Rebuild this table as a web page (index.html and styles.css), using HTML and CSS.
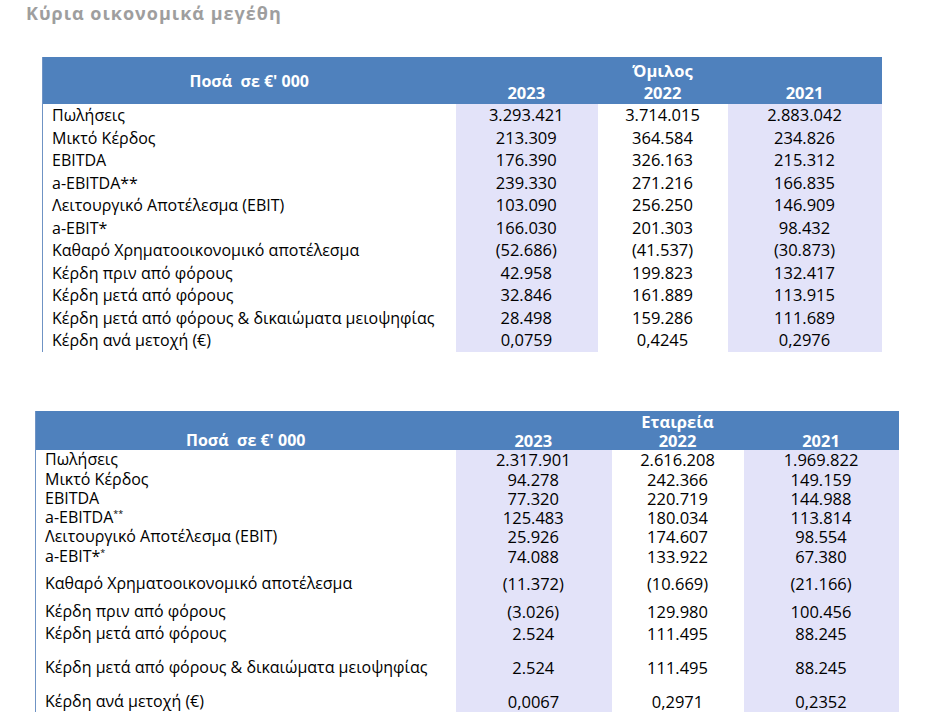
FILE: index.html
```html
<!DOCTYPE html>
<html lang="el">
<head>
<meta charset="utf-8">
<title>Κύρια οικονομικά μεγέθη</title>
<link rel="stylesheet" href="styles.css">
</head>
<body>
<h1 class="title">Κύρια οικονομικά μεγέθη</h1>

<table class="fin fin-group">
  <colgroup>
    <col class="c-label"><col class="c-a"><col class="c-b"><col class="c-c">
  </colgroup>
  <thead>
    <tr>
      <th class="h-label">Ποσά&nbsp; σε €' 000</th>
      <th class="h-year">2023</th>
      <th class="h-year">Όμιλος<br>2022</th>
      <th class="h-year">2021</th>
    </tr>
  </thead>
  <tbody>
    <tr><td class="lbl">Πωλήσεις</td><td class="num sh">3.293.421</td><td class="num">3.714.015</td><td class="num sh">2.883.042</td></tr>
    <tr><td class="lbl">Μικτό Κέρδος</td><td class="num sh">213.309</td><td class="num">364.584</td><td class="num sh">234.826</td></tr>
    <tr><td class="lbl">EBITDA</td><td class="num sh">176.390</td><td class="num">326.163</td><td class="num sh">215.312</td></tr>
    <tr><td class="lbl">a-EBITDA**</td><td class="num sh">239.330</td><td class="num">271.216</td><td class="num sh">166.835</td></tr>
    <tr><td class="lbl">Λειτουργικό Αποτέλεσμα (EBIT)</td><td class="num sh">103.090</td><td class="num">256.250</td><td class="num sh">146.909</td></tr>
    <tr><td class="lbl">a-EBIT*</td><td class="num sh">166.030</td><td class="num">201.303</td><td class="num sh">98.432</td></tr>
    <tr><td class="lbl">Καθαρό Χρηματοοικονομικό αποτέλεσμα</td><td class="num sh">(52.686)</td><td class="num">(41.537)</td><td class="num sh">(30.873)</td></tr>
    <tr><td class="lbl">Κέρδη πριν από φόρους</td><td class="num sh">42.958</td><td class="num">199.823</td><td class="num sh">132.417</td></tr>
    <tr><td class="lbl">Κέρδη μετά από φόρους</td><td class="num sh">32.846</td><td class="num">161.889</td><td class="num sh">113.915</td></tr>
    <tr><td class="lbl">Κέρδη μετά από φόρους &amp; δικαιώματα μειοψηφίας</td><td class="num sh">28.498</td><td class="num">159.286</td><td class="num sh">111.689</td></tr>
    <tr><td class="lbl">Κέρδη ανά μετοχή (€)</td><td class="num sh">0,0759</td><td class="num">0,4245</td><td class="num sh">0,2976</td></tr>
  </tbody>
</table>

<table class="fin fin-company">
  <colgroup>
    <col class="c-label"><col class="c-a"><col class="c-b"><col class="c-c">
  </colgroup>
  <thead>
    <tr>
      <th class="h-label">Ποσά&nbsp; σε €' 000</th>
      <th class="h-year">2023</th>
      <th class="h-year">Εταιρεία<br>2022</th>
      <th class="h-year">2021</th>
    </tr>
  </thead>
  <tbody>
    <tr class="r20"><td class="lbl">Πωλήσεις</td><td class="num sh">2.317.901</td><td class="num">2.616.208</td><td class="num sh">1.969.822</td></tr>
    <tr class="r19"><td class="lbl">Μικτό Κέρδος</td><td class="num sh">94.278</td><td class="num">242.366</td><td class="num sh">149.159</td></tr>
    <tr class="r19"><td class="lbl">EBITDA</td><td class="num sh">77.320</td><td class="num">220.719</td><td class="num sh">144.988</td></tr>
    <tr class="r19"><td class="lbl">a-EBITDA<sup>**</sup></td><td class="num sh">125.483</td><td class="num">180.034</td><td class="num sh">113.814</td></tr>
    <tr class="r20"><td class="lbl">Λειτουργικό Αποτέλεσμα (EBIT)</td><td class="num sh">25.926</td><td class="num">174.607</td><td class="num sh">98.554</td></tr>
    <tr class="r20"><td class="lbl">a-EBIT*<sup>*</sup></td><td class="num sh">74.088</td><td class="num">133.922</td><td class="num sh">67.380</td></tr>
    <tr class="r34"><td class="lbl">Καθαρό Χρηματοοικονομικό αποτέλεσμα</td><td class="num sh">(11.372)</td><td class="num">(10.669)</td><td class="num sh">(21.166)</td></tr>
    <tr class="r22"><td class="lbl">Κέρδη πριν από φόρους</td><td class="num sh">(3.026)</td><td class="num">129.980</td><td class="num sh">100.456</td></tr>
    <tr class="r22"><td class="lbl">Κέρδη μετά από φόρους</td><td class="num sh">2.524</td><td class="num">111.495</td><td class="num sh">88.245</td></tr>
    <tr class="r46"><td class="lbl">Κέρδη μετά από φόρους &amp; δικαιώματα μειοψηφίας</td><td class="num sh">2.524</td><td class="num">111.495</td><td class="num sh">88.245</td></tr>
    <tr class="r21"><td class="lbl">Κέρδη ανά μετοχή (€)</td><td class="num sh">0,0067</td><td class="num">0,2971</td><td class="num sh">0,2352</td></tr>
  </tbody>
</table>
</body>
</html>
```

FILE: styles.css
```css
html, body {
  margin: 0;
  padding: 0;
  background: #ffffff;
}

body {
  font-family: "Open Sans", "Noto Sans", "DejaVu Sans", sans-serif;
  color: #000000;
}

.title {
  margin: 0;
  padding-left: 26px;
  font-size: 18px;
  line-height: 26px;
  font-weight: 700;
  letter-spacing: 1px;
  color: #9e9e9e;
}

.fin {
  border-collapse: collapse;
  table-layout: fixed;
  border-left: 1px solid #6f93c4;
}

.fin th,
.fin td {
  padding: 0;
  white-space: nowrap;
}

.fin thead th {
  background: #4f81bd;
  color: #ffffff;
  font-weight: 700;
  font-size: 16.5px;
  text-align: center;
}

.fin .h-label {
  font-size: 16px;
  vertical-align: middle;
}

.fin .h-year {
  vertical-align: bottom;
}

.fin .lbl {
  font-size: 16px;
  text-align: left;
  vertical-align: middle;
  padding-left: 9px;
}

.fin .num {
  font-size: 16.5px;
  text-align: center;
  vertical-align: middle;
}

.fin .sh {
  background: #e3e3f9;
}

/* Group table */
.fin-group {
  margin: 31px 0 0 42px;
  width: 839px;
}

.fin-group .c-label { width: 413px; }
.fin-group .c-a { width: 142px; }
.fin-group .c-b { width: 130px; }
.fin-group .c-c { width: 154px; }

.fin-group thead tr {
  height: 47px;
}

.fin-group thead th {
  line-height: 22px;
}

.fin-group tbody tr {
  height: 22.5px;
}

.fin-group tbody td {
  line-height: 20px;
}

/* Company table */
.fin-company {
  margin: 59px 0 0 35px;
  width: 863px;
}

.fin-company .c-label { width: 420px; }
.fin-company .c-a { width: 156px; }
.fin-company .c-b { width: 132px; }
.fin-company .c-c { width: 155px; }

.fin-company thead tr {
  height: 39px;
}

.fin-company thead th {
  line-height: 19px;
}

.fin-company .h-label {
  vertical-align: bottom;
}

.fin-company tbody td {
  line-height: 17px;
}

.fin-company sup {
  font-size: 9px;
  line-height: 0;
  vertical-align: 6px;
}

.r19 { height: 19px; }
.r20 { height: 20px; }
.r21 { height: 21px; }
.r22 { height: 22px; }
.r34 { height: 34px; }
.r46 { height: 46px; }
```
